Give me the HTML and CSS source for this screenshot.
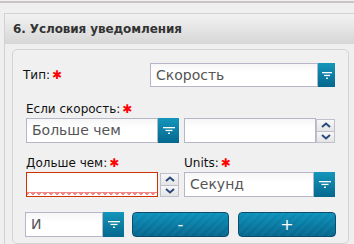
FILE: index.html
```html
<!DOCTYPE html>
<html lang="ru">
<head>
    <meta charset="UTF-8">
    <title>Условия уведомления</title>
    <link rel="stylesheet" href="styles.css">
</head>
<body>

<div class="top-strip"></div>

<div class="panel">
    <div class="panel-head">6. Условия уведомления</div>

    <div class="panel-body">
        <div class="type-row">
            <div class="label type-label">Тип:<span class="req">✱</span></div>
            <div class="select small-btn">
                <div class="select-box">Скорость</div>
                <div class="select-btn">
                    <svg width="10" height="7" viewBox="0 0 10 7"><rect x="0" y="0" width="10" height="1.3" fill="#fff"/><rect x="2" y="2.8" width="6" height="1.3" fill="#fff"/><rect x="4" y="5.6" width="2" height="1.3" fill="#fff"/></svg>
                </div>
            </div>
        </div>

        <div class="label group-label">Если скорость:<span class="req">✱</span></div>
        <div class="pair">
            <div class="select">
                <div class="select-box">Больше чем</div>
                <div class="select-btn">
                    <svg width="12" height="7" viewBox="0 0 12 7"><rect x="0" y="0" width="12" height="1.3" fill="#fff"/><rect x="2.5" y="2.8" width="7" height="1.3" fill="#fff"/><rect x="5" y="5.6" width="2" height="1.3" fill="#fff"/></svg>
                </div>
            </div>
            <div class="number">
                <div class="number-box"></div>
                <div class="spinner">
                    <div class="spin">
                        <svg width="10" height="6" viewBox="0 0 10 6"><path d="M1 5 L5 1.5 L9 5" fill="none" stroke="#2b4a7c" stroke-width="2"/></svg>
                    </div>
                    <div class="spin">
                        <svg width="10" height="6" viewBox="0 0 10 6"><path d="M1 1 L5 4.5 L9 1" fill="none" stroke="#2b4a7c" stroke-width="2"/></svg>
                    </div>
                </div>
            </div>
        </div>

        <div class="pair labels">
            <div class="label">Дольше чем:<span class="req">✱</span></div>
            <div class="label">Units:<span class="req">✱</span></div>
        </div>
        <div class="pair">
            <div class="number gap">
                <div class="number-box invalid"></div>
                <div class="spinner">
                    <div class="spin">
                        <svg width="10" height="6" viewBox="0 0 10 6"><path d="M1 5 L5 1.5 L9 5" fill="none" stroke="#2b4a7c" stroke-width="2"/></svg>
                    </div>
                    <div class="spin">
                        <svg width="10" height="6" viewBox="0 0 10 6"><path d="M1 1 L5 4.5 L9 1" fill="none" stroke="#2b4a7c" stroke-width="2"/></svg>
                    </div>
                </div>
            </div>
            <div class="select">
                <div class="select-box">Секунд</div>
                <div class="select-btn">
                    <svg width="12" height="7" viewBox="0 0 12 7"><rect x="0" y="0" width="12" height="1.3" fill="#fff"/><rect x="2.5" y="2.8" width="7" height="1.3" fill="#fff"/><rect x="5" y="5.6" width="2" height="1.3" fill="#fff"/></svg>
                </div>
            </div>
        </div>

        <div class="actions">
            <div class="select and-select">
                <div class="select-box">И</div>
                <div class="select-btn">
                    <svg width="12" height="7" viewBox="0 0 12 7"><rect x="0" y="0" width="12" height="1.3" fill="#fff"/><rect x="2.5" y="2.8" width="7" height="1.3" fill="#fff"/><rect x="5" y="5.6" width="2" height="1.3" fill="#fff"/></svg>
                </div>
            </div>
            <button class="btn btn-minus">-</button>
            <button class="btn btn-plus">+</button>
        </div>
    </div>
</div>

</body>
</html>
```

FILE: styles.css
```css
* {
    margin: 0;
    padding: 0;
    box-sizing: border-box;
}

body {
    background-color: #efefef;
    font-family: 'DejaVu Sans', sans-serif;
    font-size: 12px;
    color: #111;
    overflow: hidden;
}

.top-strip {
    height: 12px;
    margin-top: 1px;
    border-top: 2px solid #cbc3c3;
}

/* Panel with the gradient header */
.panel {
    margin-left: 4px;
    border-left: 1px solid #d2d2d2;
    border-top: 1px solid #d2d2d2;
}

.panel-head {
    height: 30px;
    line-height: 30px;
    padding-left: 8px;
    font-weight: bold;
    font-size: 12px;
    letter-spacing: -0.1px;
    color: #333;
    background: linear-gradient(#f2f2f2, #d6d6d6);
    white-space: nowrap;
}

.panel-body {
    margin: 5px 5px 0 7px;
    padding: 13px 0 5px 13px;
    border: 1px solid #d4d4d4;
    border-radius: 5px;
    background-color: #f0f0f0;
    height: 195px;
}

.label {
    line-height: 15px;
    white-space: nowrap;
}

.req {
    color: #ff0000;
    font-size: 12px;
    font-weight: bold;
    margin-left: 2px;
}

.type-row {
    display: flex;
    align-items: center;
    margin-left: -3px;
}

.type-label {
    width: 127px;
}

/* Select with the blue filter button */
.select {
    display: flex;
    height: 25px;
}

.select-box {
    flex: 1;
    border: 1px solid #b6b6c8;
    background: linear-gradient(#f6f6f6, #ffffff 40%);
    font-size: 14px;
    color: #555;
    line-height: 23px;
    padding-left: 5px;
    white-space: nowrap;
    overflow: hidden;
}

.select-btn {
    width: 21px;
    display: flex;
    align-items: center;
    justify-content: center;
    background: linear-gradient(#1496bb, #05678e);
}

.small-btn {
    width: 185px;
    height: 24px;
}

.small-btn .select-btn {
    width: 17px;
}

.group-label {
    margin-top: 15px;
    margin-bottom: 1px;
}

.pair {
    display: grid;
    grid-template-columns: 153px 151px;
    column-gap: 5px;
}

.labels {
    margin-top: 13px;
    margin-bottom: 1px;
}

/* Number input with spinner */
.number {
    display: flex;
    height: 25px;
}

.number.gap {
    gap: 2px;
}

.number-box {
    flex: 1;
    border: 1px solid #b6b6c8;
    background: linear-gradient(#f6f6f6, #ffffff 40%);
}

.number-box.invalid {
    position: relative;
    border-color: #cc3300;
    background: #fff;
}

.number-box.invalid::after {
    content: "";
    position: absolute;
    left: 0;
    right: 0;
    bottom: 0;
    height: 4px;
    background:
        linear-gradient(135deg, #f08888 33%, transparent 33%) 0 0 / 6px 4px,
        linear-gradient(225deg, #f08888 33%, transparent 33%) 0 0 / 6px 4px;
    background-repeat: repeat-x;
}

.spinner {
    width: 19px;
    display: flex;
    flex-direction: column;
    padding-top: 1px;
}

.spin {
    flex: 1;
    display: flex;
    align-items: center;
    justify-content: center;
    border: 1px solid #c0c0cc;
    background: linear-gradient(#f8f8f8, #e4e4e4);
}

.spin + .spin {
    border-top: none;
}

/* Bottom row with logic select and add/remove buttons */
.actions {
    display: flex;
    margin-top: 15px;
    margin-left: -1px;
}

.and-select {
    width: 99px;
    margin-right: 8px;
}

.btn {
    height: 25px;
    border: 1px solid #0c4d6e;
    border-radius: 4px;
    color: #fff;
    font-family: 'DejaVu Sans', sans-serif;
    font-size: 16px;
    background:
        repeating-linear-gradient(135deg, rgba(255, 255, 255, 0.035) 0 3px, rgba(0, 0, 0, 0) 3px 6px),
        linear-gradient(#0b90ba, #05668d);
}

.btn-minus {
    width: 97px;
    margin-right: 9px;
}

.btn-plus {
    width: 98px;
}
```
